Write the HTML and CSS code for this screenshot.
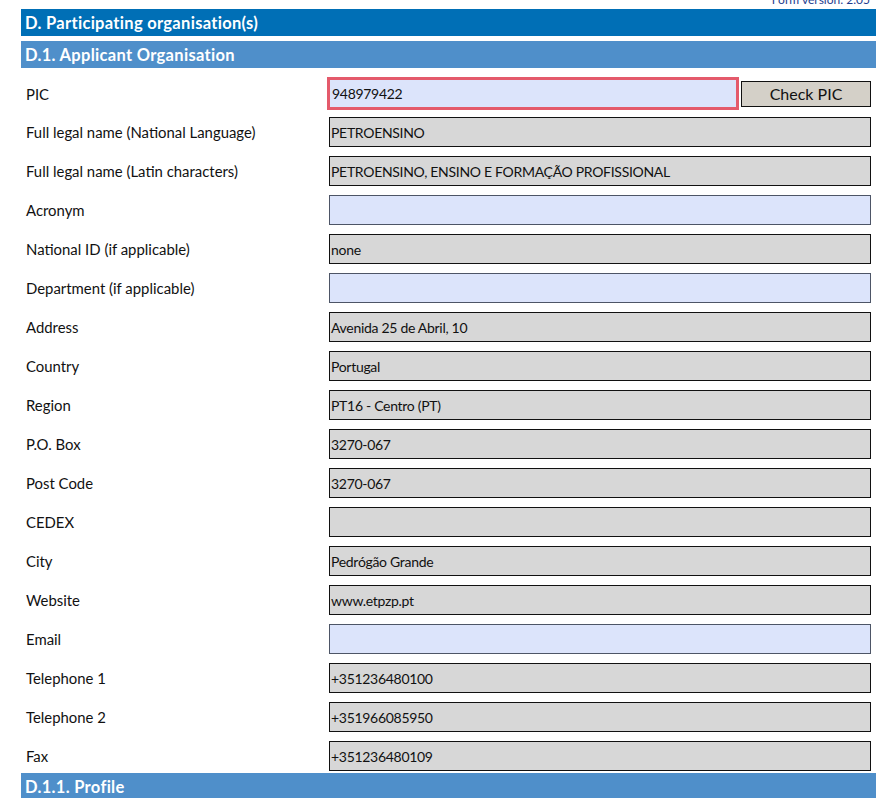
FILE: index.html
```html
<!DOCTYPE html>
<html lang="en">
<head>
<meta charset="utf-8">
<title>D. Participating organisation(s)</title>
<link rel="stylesheet" href="styles.css">
</head>
<body>
<div class="page">
  <div class="formver"><span>Form version: 2.05</span></div>
  <div class="bar bar-main">D. Participating organisation(s)</div>
  <div class="bar bar-sub">D.1. Applicant Organisation</div>
  <div class="rows">
    <div class="row row-pic">
      <div class="label">PIC</div>
      <div class="pic-wrap">
        <div class="field field-pic">948979422</div>
        <div class="btn">Check PIC</div>
      </div>
    </div>
    <div class="row"><div class="label">Full legal name (National Language)</div><div class="field gray">PETROENSINO</div></div>
    <div class="row"><div class="label">Full legal name (Latin characters)</div><div class="field gray">PETROENSINO, ENSINO E FORMAÇÃO PROFISSIONAL</div></div>
    <div class="row"><div class="label">Acronym</div><div class="field blue"></div></div>
    <div class="row"><div class="label">National ID (if applicable)</div><div class="field gray">none</div></div>
    <div class="row"><div class="label">Department (if applicable)</div><div class="field blue"></div></div>
    <div class="row"><div class="label">Address</div><div class="field gray">Avenida 25 de Abril, 10</div></div>
    <div class="row"><div class="label">Country</div><div class="field gray">Portugal</div></div>
    <div class="row"><div class="label">Region</div><div class="field gray">PT16 - Centro (PT)</div></div>
    <div class="row"><div class="label">P.O. Box</div><div class="field gray">3270-067</div></div>
    <div class="row"><div class="label">Post Code</div><div class="field gray">3270-067</div></div>
    <div class="row"><div class="label">CEDEX</div><div class="field gray"></div></div>
    <div class="row"><div class="label">City</div><div class="field gray">Pedrógão Grande</div></div>
    <div class="row"><div class="label">Website</div><div class="field gray">www.etpzp.pt</div></div>
    <div class="row"><div class="label">Email</div><div class="field blue"></div></div>
    <div class="row"><div class="label">Telephone 1</div><div class="field gray">+351236480100</div></div>
    <div class="row"><div class="label">Telephone 2</div><div class="field gray">+351966085950</div></div>
    <div class="row"><div class="label">Fax</div><div class="field gray">+351236480109</div></div>
  </div>
  <div class="bar bar-sub bar-profile">D.1.1. Profile</div>
</div>
</body>
</html>
```

FILE: styles.css
```css
html, body {
  margin: 0;
  padding: 0;
  background: #ffffff;
}
body {
  font-family: Lato, "Open Sans", "Liberation Sans", sans-serif;
  color: #111111;
}
.page {
  width: 855px;
  margin-left: 21px;
  height: 798px;
  overflow: hidden;
}
.formver {
  height: 9px;
  display: flex;
  justify-content: flex-end;
  align-items: flex-start;
  padding-right: 6px;
}
.formver span {
  font-size: 12px;
  line-height: 12px;
  margin-top: -6px;
  color: #1e3d8f;
}
.bar {
  height: 27px;
  display: flex;
  align-items: center;
  padding-left: 4px;
  color: #ffffff;
  font-weight: 700;
  font-size: 16.5px;
  letter-spacing: 0.3px;
}
.bar-main {
  background: #006fb6;
}
.bar-sub {
  background: #4f8fca;
  margin-top: 5px;
}
.bar-profile {
  margin-top: 2px;
}
.rows {
  display: flex;
  flex-direction: column;
  gap: 9px;
  margin-top: 9px;
}
.row {
  display: grid;
  grid-template-columns: 308px 542px;
  align-items: center;
  height: 30px;
}
.row-pic {
  height: 33px;
  margin-bottom: -2px;
}
.label {
  padding-left: 5px;
  font-size: 14.9px;
}
.field {
  box-sizing: border-box;
  height: 30px;
  display: flex;
  align-items: center;
  padding-left: 1px;
  font-size: 14px;
  letter-spacing: -0.3px;
  white-space: nowrap;
}
.gray {
  background: #d7d7d7;
  border: 1.5px solid #111111;
}
.blue {
  background: #dce4fb;
  border: 1px solid #4d5566;
}
.pic-wrap {
  display: flex;
  align-items: center;
  gap: 2px;
  margin-left: -2px;
}
.field-pic {
  width: 412px;
  height: 33px;
  background: #dce4fb;
  border: 3px solid #e45a6b;
  padding-left: 2px;
}
.btn {
  box-sizing: border-box;
  width: 130px;
  height: 26px;
  background: #d4d0c8;
  border: 1.5px solid #111111;
  display: flex;
  align-items: center;
  justify-content: center;
  font-size: 16px;
}
```
